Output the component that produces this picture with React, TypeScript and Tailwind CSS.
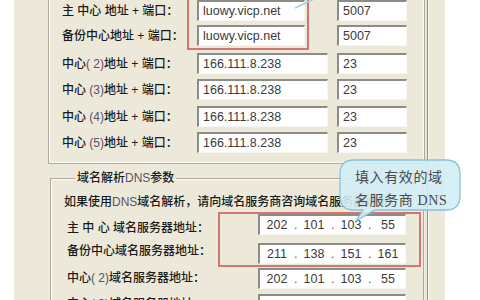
import React from "react";

const boxCls =
  "h-[21px] bg-white border-t-2 border-l-2 border-t-[#8c8b85] border-l-[#8c8b85] border-b border-r border-b-[#f7f6f0] border-r-[#f7f6f0] flex items-center text-[12.5px] text-[#3a3a3a] leading-none font-['Liberation_Sans',sans-serif]";

function Box({ w, children }: { w: string; children?: React.ReactNode }) {
  return <div className={`${w} ${boxCls} pl-[4px]`}>{children}</div>;
}

function Num({ children }: { children: React.ReactNode }) {
  return <span className="text-[#5b5066]">{children}</span>;
}

function AddrRow({
  label,
  addr,
  port,
  addrW,
  mt,
}: {
  label: React.ReactNode;
  addr: string;
  port: string;
  addrW: string;
  mt: string;
}) {
  return (
    <div className={`flex items-center ${mt}`}>
      <div className="w-[135px] text-[12px] leading-[16px] font-medium text-[#1a1a1a] whitespace-pre">{label}</div>
      <div className="w-[140px]">
        <Box w={addrW}>{addr}</Box>
      </div>
      <Box w="w-[70px]">{port}</Box>
    </div>
  );
}

function IpBox({ parts }: { parts: string[] }) {
  return (
    <div className={`w-[148px] ${boxCls} px-0`}>
      {parts.map((p, i) => (
        <React.Fragment key={i}>
          {i > 0 && <span className="w-[3px] text-center text-[#555]">.</span>}
          <span className="flex-1 text-center">{p}</span>
        </React.Fragment>
      ))}
    </div>
  );
}

function DnsRow({
  label,
  parts,
  mt,
  lpt,
}: {
  label: React.ReactNode;
  parts: string[];
  mt: string;
  lpt: string;
}) {
  return (
    <div className={`flex items-start ${mt}`}>
      <div className={`w-[194px] pl-[3px] text-[12px] leading-[16px] font-medium text-[#1a1a1a] whitespace-pre ${lpt}`}>{label}</div>
      <IpBox parts={parts} />
    </div>
  );
}

export default function App() {
  return (
    <div className="relative w-[480px] h-[300px] overflow-hidden bg-white font-['Liberation_Sans','Noto_Sans_CJK_SC',sans-serif]">
      <div className="flex h-full">
        <div className="w-[14px] bg-white" />
        <div className="flex h-full w-[431px] bg-[#ece9da]">
          {/* content area */}
          <div className="flex-1 pl-[34px] pr-[2px] flex flex-col">
            {/* group 1 */}
            <div className="border-l border-r border-b border-[#aeab9c] shadow-[inset_1px_-1px_0_#fbfaf4,inset_-1px_0_0_#fbfaf4] pl-[13px] pb-[10px] flex flex-col">
              <AddrRow mt="mt-0" label="主 中心 地址 + 端口：" addr="luowy.vicp.net" port="5007" addrW="w-[108px]" />
              <AddrRow mt="mt-[4px]" label="备份中心地址 + 端口：" addr="luowy.vicp.net" port="5007" addrW="w-[108px]" />
              <AddrRow
                mt="mt-[7px]"
                label={<>中心<Num>( 2)</Num>地址 + 端口：</>}
                addr="166.111.8.238"
                port="23"
                addrW="w-[131px]"
              />
              <AddrRow
                mt="mt-[5px]"
                label={<>中心 <Num>(3)</Num>地址 + 端口：</>}
                addr="166.111.8.238"
                port="23"
                addrW="w-[131px]"
              />
              <AddrRow
                mt="mt-[6px]"
                label={<>中心 <Num>(4)</Num>地址 + 端口：</>}
                addr="166.111.8.238"
                port="23"
                addrW="w-[131px]"
              />
              <AddrRow
                mt="mt-[5px]"
                label={<>中心 <Num>(5)</Num>地址 + 端口：</>}
                addr="166.111.8.238"
                port="23"
                addrW="w-[131px]"
              />
            </div>

            {/* group 2 */}
            <fieldset className="mt-[6px] ml-[2px] mr-[1px] border border-[#aeab9c] shadow-[inset_1px_1px_0_#fbfaf4] pl-[13px] pb-[10px] min-w-0">
              <legend className="ml-[11px] px-[2px] text-[12px] leading-[16px] font-medium text-[#1a1a1a]">
                域名解析<Num>DNS</Num>参数
              </legend>
              <div className="mt-[8px] text-[12px] leading-[16px] font-medium text-[#1a1a1a] whitespace-nowrap overflow-hidden">
                如果使用<Num>DNS</Num>域名解析，请向域名服务商咨询域名服务器地址。
              </div>
              <DnsRow mt="mt-[4px]" lpt="pt-[6px]" label="主 中 心 域名服务器地址：" parts={["202", "101", "103", "55"]} />
              <DnsRow mt="mt-[7px]" lpt="pt-0" label="备份中心域名服务器地址：" parts={["211", "138", "151", "161"]} />
              <DnsRow
                mt="mt-[4px]"
                lpt="pt-[2px]"
                label={<>中心<Num>( 2)</Num>域名服务器地址：</>}
                parts={["202", "101", "103", "55"]}
              />
              <DnsRow
                mt="mt-[5px]"
                lpt="pt-[2px]"
                label={<>中心<Num>( 3)</Num>域名服务器地址：</>}
                parts={["202", "101", "103", "55"]}
              />
            </fieldset>
          </div>
          <div className="w-px bg-[#8f8d84]" />
          <div className="w-px bg-[#fbfaf4]" />
          <div className="w-[16px]" />
        </div>
        <div className="flex-1 bg-white" />
      </div>

      {/* annotation: red boxes */}
      <div className="absolute left-[187px] top-[-4px] w-[122px] h-[54px] border-2 border-[#d57471] pointer-events-none" />
      <div className="absolute left-[218px] top-[212px] w-[203px] h-[55px] border-2 border-[#d57471] pointer-events-none" />

      {/* tail of upper callout */}
      <svg className="absolute left-0 top-0 pointer-events-none" width="480" height="300">
        <path d="M295 8 L314 -1" stroke="#9fd0e0" strokeWidth="1.6" fill="none" />
      </svg>

      {/* callout */}
      <div className="absolute left-[338px] top-[158px] w-[126px] h-[66px] pointer-events-none">
        <svg className="absolute left-0 top-0" width="126" height="66">
          <path
            d="M16 2 H108 Q122 2 122 16 V38 Q122 52 108 52 H37 L18 63 L25 52 H16 Q2 52 2 38 V16 Q2 2 16 2 Z"
            fill="#d2eef6"
            fillOpacity="0.9"
            stroke="#85c4d6"
            strokeWidth="1.3"
          />
        </svg>
        <div className="relative pl-[17px] pt-[8px] text-[14px] leading-[23px] tracking-[0.6px] text-[#4a4a4a] font-['Liberation_Serif','Noto_Sans_CJK_SC',serif]">
          <div>填入有效的域</div>
          <div>名服务商 DNS</div>
        </div>
      </div>
    </div>
  );
}
